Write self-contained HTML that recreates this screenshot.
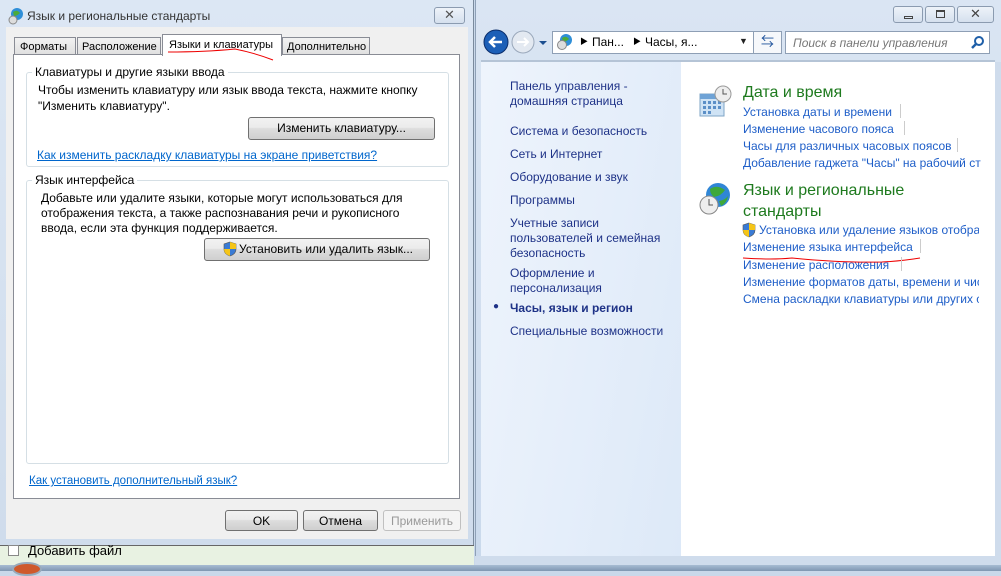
<!DOCTYPE html>
<html><head><meta charset="utf-8"><style>
*{margin:0;padding:0;box-sizing:border-box}
body{width:1001px;height:571px;overflow:hidden;position:relative;font-family:"Liberation Sans","Noto Sans CJK SC",sans-serif;font-size:12px;color:#000;background:#c9d8ea}
.a{position:absolute;white-space:nowrap}
.lnk{color:#0066cc;text-decoration:underline}
.btn{position:absolute;border:1px solid #707070;border-radius:3px;background:linear-gradient(#f2f2f2 0,#ebebeb 45%,#dddddd 50%,#cfcfcf 100%);text-align:center;font-size:12px;line-height:20px}
.grp{position:absolute;border:1px solid #d5dfe5;border-radius:3px}
.cp{color:#1e5ec8;font-size:12px}
.nav{color:#1e3287}
.tab{font-size:11px;overflow:hidden}
</style></head><body>
<div class="a" style="left:0;top:0;width:474px;height:545px;background:linear-gradient(#dce7f4,#cfdcec);border-right:1px solid #7a8a9c"></div>
<div class="a" style="left:27px;top:9px;color:#333;font-size:12px">Язык и региональные стандарты</div>
<svg class="a" style="left:8px;top:7px" width="16" height="18"><circle cx="9" cy="7" r="6" fill="#2f8fd8"/><path d="M5 5 Q9 2 12 6 Q9 9 6 9Z" fill="#4caa3a"/><circle cx="5" cy="13" r="4" fill="#ddd" stroke="#888"/></svg>
<div class="a" style="left:434px;top:7px;width:31px;height:17px;border:1px solid #8b9bb0;border-radius:3px;background:linear-gradient(#eef3f9,#d5e0ee);text-align:center;font-size:13px;line-height:14px;color:#555">✕</div>
<div class="a" style="left:6px;top:27px;width:462px;height:512px;background:#f0f0f0"></div>
<div class="a tab" style="left:14px;top:37px;width:62px;height:18px;border:1px solid #898c95;background:linear-gradient(#f2f2f2,#e0e0e0);padding:3px 0 0 5px">Форматы</div>
<div class="a tab" style="left:77px;top:37px;width:84px;height:18px;border:1px solid #898c95;background:linear-gradient(#f2f2f2,#e0e0e0);padding:3px 0 0 4px">Расположение</div>
<div class="a tab" style="left:282px;top:37px;width:88px;height:18px;border:1px solid #898c95;background:linear-gradient(#f2f2f2,#e0e0e0);padding:3px 0 0 4px">Дополнительно</div>
<div class="a" style="left:13px;top:54px;width:447px;height:445px;background:#fff;border:1px solid #898c95"></div>
<div class="a tab" style="left:162px;top:34px;width:120px;height:22px;background:#fff;border:1px solid #898c95;border-bottom:none;padding:4px 0 0 6px">Языки и клавиатуры</div>
<svg class="a" style="left:165px;top:46px" width="110" height="16"><path d="M3 6 Q40 6 70 3 Q90 7 108 14" stroke="#e00" fill="none" stroke-width="1"/></svg>
<div class="grp" style="left:26px;top:72px;width:423px;height:95px"></div>
<div class="a" style="left:32px;top:65px;background:#fff;padding:0 3px">Клавиатуры и другие языки ввода</div>
<div class="a" style="left:38px;top:83px">Чтобы изменить клавиатуру или язык ввода текста, нажмите кнопку</div>
<div class="a" style="left:38px;top:99px">"Изменить клавиатуру".</div>
<div class="btn" style="left:248px;top:117px;width:187px;height:23px">Изменить клавиатуру...</div>
<div class="a lnk" style="left:37px;top:148px">Как изменить раскладку клавиатуры на экране приветствия?</div>
<div class="grp" style="left:26px;top:180px;width:423px;height:284px"></div>
<div class="a" style="left:32px;top:173px;background:#fff;padding:0 3px">Язык интерфейса</div>
<div class="a" style="left:41px;top:191px">Добавьте или удалите языки, которые могут использоваться для</div>
<div class="a" style="left:41px;top:206px">отображения текста, а также распознавания речи и рукописного</div>
<div class="a" style="left:41px;top:221px">ввода, если эта функция поддерживается.</div>
<div class="btn" style="left:204px;top:238px;width:226px;height:23px;padding-left:18px">Установить или удалить язык...</div>
<svg class="a" style="left:223px;top:241px" width="14" height="16"><path d="M7 1 L13 3 V8 Q13 13 7 15 Q1 13 1 8 V3Z" fill="#3a7bd5" stroke="#555" stroke-width=".6"/><path d="M7 1 V8 H13 V3Z M1 8 H7 V15 Q1 13 1 8Z" fill="#f5c518"/></svg>
<div class="a lnk" style="left:29px;top:475px;font-size:11.5px">Как установить дополнительный язык?</div>
<div class="btn" style="left:225px;top:510px;width:73px;height:21px">OK</div>
<div class="btn" style="left:303px;top:510px;width:75px;height:21px">Отмена</div>
<div class="btn" style="left:383px;top:510px;width:78px;height:21px;border-color:#c0c0c0;color:#999;background:#f4f4f4">Применить</div>
<div class="a" style="left:0;top:545px;width:474px;height:20px;background:#e8f2e2;border-top:1px solid #666"></div>
<div class="a" style="left:8px;top:545px;width:11px;height:11px;border:1px solid #888;background:#fff"></div>
<div class="a" style="left:28px;top:543px;font-size:13px">Добавить файл</div>
<div class="a" style="left:0;top:565px;width:1001px;height:6px;background:linear-gradient(#a7bcd3,#7f97b2)"></div>
<div class="a" style="left:12px;top:562px;width:30px;height:14px;border-radius:50%;background:#cf5a2c;border:2px solid #9ab"></div>
<div class="a" style="left:475px;top:0;width:526px;height:565px;background:linear-gradient(#dae5f3,#cad9ec);border-left:1px solid #8ea0b6"></div>
<div class="a" style="left:893px;top:6px;width:30px;height:17px;border:1px solid #8b9bb0;border-radius:3px;background:linear-gradient(#eef3f9,#d5e0ee)"><div style="margin:9px 0 0 10px;width:9px;height:3px;border:1px solid #444"></div></div>
<div class="a" style="left:925px;top:6px;width:30px;height:17px;border:1px solid #8b9bb0;border-radius:3px;background:linear-gradient(#eef3f9,#d5e0ee)"><div style="margin:3px 0 0 10px;width:9px;height:8px;border:1px solid #444;border-top-width:2px"></div></div>
<div class="a" style="left:957px;top:6px;width:37px;height:17px;border:1px solid #8b9bb0;border-radius:3px;background:linear-gradient(#eef3f9,#d5e0ee);text-align:center;font-size:13px;line-height:14px;color:#444">✕</div>
<svg class="a" style="left:481px;top:28px" width="72" height="30"><circle cx="15" cy="14" r="12" fill="#1c5fb7" stroke="#0a2d6b"/><path d="M21 14H10M14 9L9 14L14 19" stroke="#fff" stroke-width="2.5" fill="none"/><circle cx="42" cy="14" r="11" fill="#e3e9f1" stroke="#9aa8bb"/><path d="M36 14H47M43 10L47 14L43 18" stroke="#fff" stroke-width="2" fill="none"/><path d="M58 13H66L62 17Z" fill="#1c4f90"/></svg>
<div class="a" style="left:552px;top:31px;width:230px;height:23px;background:#fff;border:1px solid #8e9fb5"></div>
<svg class="a" style="left:556px;top:33px" width="18" height="18"><circle cx="10" cy="7" r="6" fill="#2f8fd8"/><path d="M6 5 Q10 2 13 6 Q10 9 7 9Z" fill="#4caa3a"/><circle cx="6" cy="12" r="4.5" fill="#ddd" stroke="#888"/></svg>
<div class="a" style="left:580px;top:36px;font-size:8px">▶</div>
<div class="a" style="left:592px;top:35px">Пан...</div>
<div class="a" style="left:633px;top:36px;font-size:8px">▶</div>
<div class="a" style="left:645px;top:35px">Часы, я...</div>
<div class="a" style="left:739px;top:36px;font-size:9px;color:#222">▼</div>
<div class="a" style="left:753px;top:31px;width:29px;height:23px;border:1px solid #8e9fb5;background:#f6f8fb;color:#1a4f9a;text-align:center;font-size:13px;line-height:20px">⇆</div>
<div class="a" style="left:785px;top:31px;width:205px;height:23px;background:#fff;border:1px solid #8e9fb5;padding:4px 0 0 7px;font-style:italic;color:#777">Поиск в панели управления</div>
<svg class="a" style="left:971px;top:35px" width="14" height="14"><circle cx="8" cy="6" r="4" stroke="#1f5fa8" stroke-width="2" fill="none"/><path d="M5 9L1 13" stroke="#1f5fa8" stroke-width="2.5"/></svg>
<div class="a" style="left:481px;top:60px;width:514px;height:2px;background:#b5c4d6"></div>
<div class="a" style="left:481px;top:62px;width:200px;height:494px;background:linear-gradient(100deg,#eef4fc,#dde9f8)"></div>
<div class="a" style="left:681px;top:62px;width:314px;height:494px;background:#fff"></div>
<div class="a nav" style="left:510px;top:79px">Панель управления -</div>
<div class="a nav" style="left:510px;top:94px">домашняя страница</div>
<div class="a nav" style="left:510px;top:124px">Система и безопасность</div>
<div class="a nav" style="left:510px;top:147px">Сеть и Интернет</div>
<div class="a nav" style="left:510px;top:170px">Оборудование и звук</div>
<div class="a nav" style="left:510px;top:193px">Программы</div>
<div class="a nav" style="left:510px;top:216px">Учетные записи</div>
<div class="a nav" style="left:510px;top:231px">пользователей и семейная</div>
<div class="a nav" style="left:510px;top:246px">безопасность</div>
<div class="a nav" style="left:510px;top:266px">Оформление и</div>
<div class="a nav" style="left:510px;top:281px">персонализация</div>
<div class="a" style="left:493px;top:301px;color:#1e3287;font-size:10px">●</div>
<div class="a" style="left:510px;top:301px;font-weight:bold;color:#1e3287">Часы, язык и регион</div>
<div class="a nav" style="left:510px;top:324px">Специальные возможности</div>
<svg class="a" style="left:698px;top:85px" width="36" height="34"><rect x="2" y="9" width="24" height="22" fill="#cfe3f5" stroke="#7fa4c6"/><rect x="2" y="9" width="24" height="5" fill="#6fa3d6"/><g fill="#5b8fc7"><rect x="5" y="16" width="3" height="3"/><rect x="10" y="16" width="3" height="3"/><rect x="15" y="16" width="3" height="3"/><rect x="20" y="16" width="3" height="3"/><rect x="5" y="21" width="3" height="3"/><rect x="10" y="21" width="3" height="3"/><rect x="15" y="21" width="3" height="3"/><rect x="20" y="21" width="3" height="3"/><rect x="5" y="26" width="3" height="3"/><rect x="10" y="26" width="3" height="3"/></g><circle cx="25" cy="9" r="8" fill="#eee" stroke="#999"/><path d="M25 4V9H29" stroke="#555" fill="none"/></svg>
<div class="a" style="left:743px;top:84px;font-size:16px;color:#1e7a1e">Дата и время</div>
<div class="a cp" style="left:743px;top:105px">Установка даты и времени</div>
<div class="a" style="left:900px;top:104px;width:1px;height:14px;background:#ccc"></div>
<div class="a cp" style="left:743px;top:122px">Изменение часового пояса</div>
<div class="a" style="left:904px;top:121px;width:1px;height:14px;background:#ccc"></div>
<div class="a cp" style="left:743px;top:139px">Часы для различных часовых поясов</div>
<div class="a" style="left:957px;top:138px;width:1px;height:14px;background:#ccc"></div>
<div class="a cp" style="left:743px;top:156px">Добавление гаджета "Часы" на рабочий ст</div>
<svg class="a" style="left:697px;top:181px" width="36" height="36"><circle cx="21" cy="14" r="12" fill="#2f86d6"/><path d="M13 8 Q20 3 28 9 Q24 15 17 16 Q13 13 13 8Z M22 20 Q28 19 31 15 Q30 22 24 25Z" fill="#3ea83a"/><circle cx="12" cy="24" r="9" fill="#eee" stroke="#888"/><path d="M12 18V24H16" stroke="#555" fill="none"/></svg>
<div class="a" style="left:743px;top:182px;font-size:16px;color:#1e7a1e">Язык и региональные</div>
<div class="a" style="left:743px;top:203px;font-size:16px;color:#1e7a1e">стандарты</div>
<svg class="a" style="left:742px;top:222px" width="14" height="16"><path d="M7 1 L13 3 V8 Q13 13 7 15 Q1 13 1 8 V3Z" fill="#3a7bd5" stroke="#555" stroke-width=".6"/><path d="M7 1 V8 H13 V3Z M1 8 H7 V15 Q1 13 1 8Z" fill="#f5c518"/></svg>
<div class="a cp" style="left:759px;top:223px;width:220px;overflow:hidden">Установка или удаление языков отобра:</div>
<div class="a cp" style="left:743px;top:240px">Изменение языка интерфейса</div>
<div class="a" style="left:920px;top:239px;width:1px;height:14px;background:#ccc"></div>
<svg class="a" style="left:742px;top:253px" width="180" height="12"><path d="M1 5 Q30 7 50 5 Q100 10 140 9 Q160 8 178 5" stroke="#e00" fill="none"/></svg>
<div class="a cp" style="left:743px;top:258px">Изменение расположения</div>
<div class="a" style="left:901px;top:257px;width:1px;height:14px;background:#ccc"></div>
<div class="a cp" style="left:743px;top:275px;width:236px;overflow:hidden">Изменение форматов даты, времени и чис</div>
<div class="a cp" style="left:743px;top:292px;width:236px;overflow:hidden">Смена раскладки клавиатуры или других с</div>
<div class="a" style="left:995px;top:62px;width:6px;height:494px;background:#cfdcec"></div>
<div class="a" style="left:475px;top:556px;width:526px;height:9px;background:#cfdcec"></div>
</body></html>
